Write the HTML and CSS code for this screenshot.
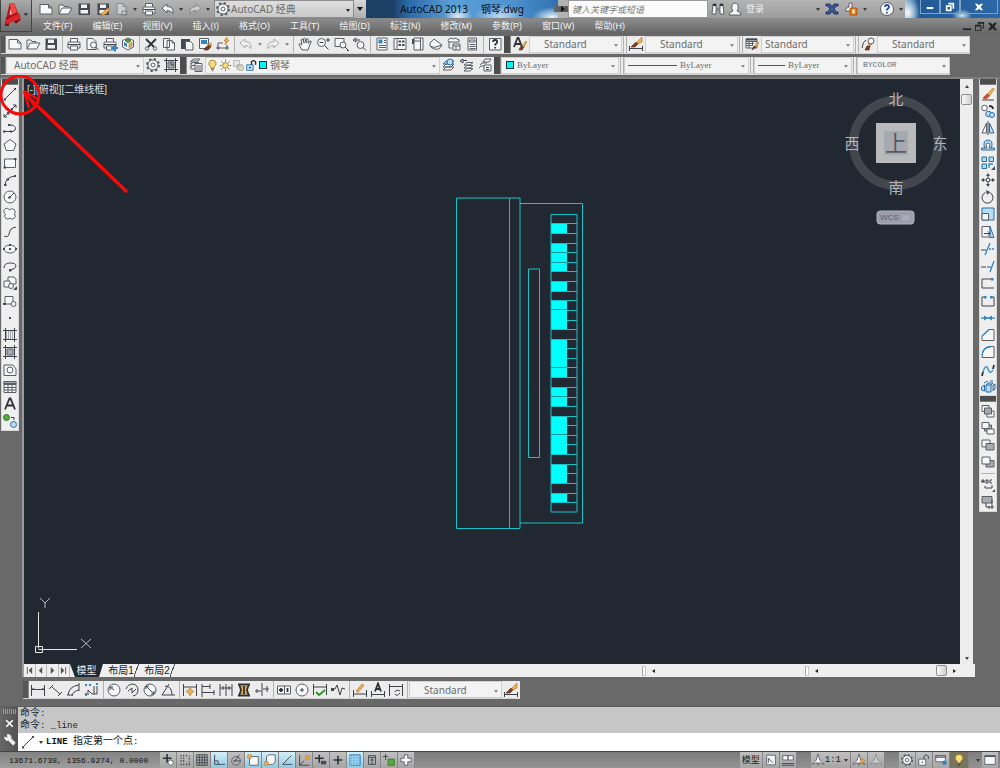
FILE: index.html
```html
<!DOCTYPE html>
<html lang="zh-CN">
<head>
<meta charset="utf-8">
<title>AutoCAD 2013 钢琴.dwg</title>
<link rel="stylesheet" href="styles.css">
</head>
<body>
<svg class="sprite" aria-hidden="true">
<symbol id="new" viewBox="0 0 16 16"><path class="w" d="M2 3.500h8.500l3.500 3.500v6H2zM10.500 3.500V7H14"/></symbol>
<symbol id="open" viewBox="0 0 16 16"><path class="w" d="M2 13V4h4l1 1.500h4V7M2 13l3-6h10l-3.500 6z"/></symbol>
<symbol id="save" viewBox="0 0 16 16"><path class="d" d="M2.500 2.500h11.500v11.500H2.500z"/><path class="wf" d="M5 3.500h6v3.500H5zM4.500 9h7.500v3.500H4.500z"/></symbol>
<symbol id="saveas" viewBox="0 0 16 16"><use href="#save"/><path class="o" d="M7 12l6-5 2 2-6 5-3 1z"/></symbol>
<symbol id="page" viewBox="0 0 16 16"><path class="w" d="M3 2.500h6l3 3v8H3z"/><path d="M9 2.500v3h3M8 10h5v4H8z"/></symbol>
<symbol id="print" viewBox="0 0 16 16"><path class="w" d="M4.500 6V2.500h7V6M4 12H2V7q0-1 1-1h10q1 0 1 1v5h-2M4.500 10h7v4h-7z"/><path class="k" d="M2 8.500h12"/></symbol>
<symbol id="preview" viewBox="0 0 16 16"><path class="w" d="M3 2.500h6l3 3v8H3z"/><circle class="w" cx="9.500" cy="9" r="3"/><path class="k" d="M11.500 11l3 3"/></symbol>
<symbol id="plot" viewBox="0 0 16 16"><use href="#print"/><path class="bf" d="M9 11h3V8.500h2V11h2v2h-2v2.500h-2V13H9z"/></symbol>
<symbol id="cube" viewBox="0 0 16 16"><path class="w" d="M8 2l5.500 2.500V11L8 14l-5.500-3V4.500z"/><path class="bf" d="M4 6l3 1.500V11L4 9.500z"/><path class="gf" d="M8 3l3 1.500-3 2-3-2z"/><path class="o" d="M9 7.500L12 6v4l-3 2z"/></symbol>
<symbol id="cut" viewBox="0 0 16 16"><path class="k2" d="M3 3l8 8M13 3l-8 8"/><circle cx="4" cy="12.500" r="1.700"/><circle cx="12" cy="12.500" r="1.700"/></symbol>
<symbol id="copy" viewBox="0 0 16 16"><path class="w" d="M2.500 2.500h6v9h-6zM6 4.500h5l2.500 2.500v7H6zM11 4.500V7h2.500"/></symbol>
<symbol id="paste" viewBox="0 0 16 16"><path class="d" d="M2 3h9v10H2z"/><path class="w" d="M6.500 5.500h5l2.500 2.500v6H6.500z"/></symbol>
<symbol id="match" viewBox="0 0 16 16"><path class="w" d="M2.500 2.500h9v10h-9z"/><path class="bf" d="M4 4h6v4H4z"/><path class="br" d="M7 14l2-3 3-2 2 2-3 3z"/><path class="o" d="M10 8l4-1 .5 3z"/></symbol>
<symbol id="blk" viewBox="0 0 16 16"><path d="M3 12V7h5M3 12h9V9M2 11h2v2H2zM11 11h2v2h-2z"/><path class="o" d="M12 1l-3 4h2l-1 4 4-5h-2z"/></symbol>
<symbol id="undo" viewBox="0 0 16 16"><path class="w" d="M2 7l5-4v2.500q7 0 6 7-2-3-6-3V12z"/></symbol>
<symbol id="redo" viewBox="0 0 16 16"><path class="w" d="M14 7L9 3v2.500q-7 0-6 7 2-3 6-3V12z"/></symbol>
<symbol id="hand" viewBox="0 0 16 16"><path class="w" d="M5 14L2 8.500q0-1.500 1.500-.5L5 9 4 4q1-1.500 2 0l1 3-.5-4.500q1-1 1.800 0L9 7l.5-4q1-1 1.700 0V7.500L13 5q1.500-.5 1 1l-2 5-1 3z"/></symbol>
<symbol id="zoomrt" viewBox="0 0 16 16"><circle class="w" cx="6.500" cy="6.500" r="4"/><path class="k" d="M9.500 9.500l4 4M4.500 6.500h4M11 4h4M13 2v4"/></symbol>
<symbol id="zoomwin" viewBox="0 0 16 16"><path class="w" d="M2 2.500h9v8H2z"/><circle class="w" cx="10" cy="9" r="3"/><path class="k" d="M12 11l3 3M14 14.500h2"/></symbol>
<symbol id="zoomprev" viewBox="0 0 16 16"><circle class="w" cx="9.500" cy="9" r="3.500"/><path class="k" d="M12 11.500l3 3M2 4l3-2v4zM5 4h4"/></symbol>
<symbol id="props" viewBox="0 0 16 16"><path class="w" d="M3 2h10v12H3z"/><path class="bf" d="M4.500 3.500h4v4h-4z"/><path d="M10 4.500h2M10 6.500h2M5 9.500h7M5 11.500h7"/></symbol>
<symbol id="dc" viewBox="0 0 16 16"><path class="w" d="M2 2.500h12v11H2zM5 2.500v11"/><path class="d" d="M6.500 4.500h2.500v2H6.500zM10 4.500h2.500v2H10zM6.500 8h2.500v2H6.500zM10 8h2.500v2H10z"/></symbol>
<symbol id="tp" viewBox="0 0 16 16"><path class="w" d="M4 2h9v12H4zM10.500 2v12M4 5h6"/><path class="d" d="M2 3h2v5H2z"/></symbol>
<symbol id="sheet" viewBox="0 0 16 16"><path class="w" d="M2 7l4-4 8 6-3 4q-6 1-9-3zM2 10q4 3 9 0l3-1"/></symbol>
<symbol id="markup" viewBox="0 0 16 16"><path class="w" d="M3 3q2-2 4 0 2-2 4 0 3 0 2 3H3q-2-1 0-3M3 6v6h3"/><path class="w" d="M7 8h7v6H7zM7 10h7M10 10v4"/></symbol>
<symbol id="calc" viewBox="0 0 16 16"><path class="w" d="M4 2h8.500v12H4zM5.500 4h5.500v2H5.500z"/><path d="M5.500 8.500h6M5.500 10.500h6M5.500 12.500h6"/></symbol>
<symbol id="help" viewBox="0 0 16 16"><path class="w" d="M2.500 2.500h11.500v11.500H2.500z"/><path class="k2" d="M6 6q0-2 2.200-2t2 2q0 1-2 2.500v1M8.200 11v1.500"/></symbol>
<symbol id="gear" viewBox="0 0 16 16"><circle cx="8" cy="8" r="6" stroke-width="2" stroke-dasharray="2.350 2.350"/><circle class="w" cx="8" cy="8" r="5"/><circle cx="8" cy="8" r="2"/></symbol>
<symbol id="gearlock" viewBox="0 0 16 16"><path class="k" d="M1 3.500h14M1 12.500h14M3.500 1v14M12.500 1v14"/><path class="gy" d="M5 5h6v6H5z"/><path class="k" d="M8 5v3h3"/></symbol>
<symbol id="layprop" viewBox="0 0 16 16"><path class="w" d="M3 4l3-2h6l-2 2zM3 7l2-1.500h6M2 10.500l2-2h3"/><path class="w" d="M7 6.500h7v8H7z"/><path d="M8 9h5M8 11h5M8 13h5M3 4v8h4"/></symbol>
<symbol id="bulb" viewBox="0 0 16 16"><path class="y" d="M8 1.500a4.200 4.200 0 0 1 2 8v2H6v-2a4.200 4.200 0 0 1 2-8z"/><path class="k" d="M6.200 12.500h3.600M7 14.500h2"/></symbol>
<symbol id="sun" viewBox="0 0 16 16"><circle class="y" cx="8" cy="8" r="3.500"/><path class="k" d="M8 1v2M8 13v2M1 8h2M13 8h2M3 3l1.500 1.500M11.500 11.500L13 13M3 13l1.500-1.500M11.500 4.500L13 3"/></symbol>
<symbol id="vp" viewBox="0 0 16 16"><path class="wl" d="M2 2h7v7H2zM6 7h7v6H6z"/><circle class="y2" cx="11" cy="11" r="3.500"/></symbol>
<symbol id="unlock" viewBox="0 0 16 16"><path class="bl" d="M2 7h8v7H2z"/><path class="k2" d="M8 7V3.500q2.500-3 5 0V7M6 9.500v2"/></symbol>
<symbol id="unlockg" viewBox="0 0 16 16"><path class="w" d="M2 7h8v7H2z"/><path class="k" d="M8 7V3.500q2.500-3 5 0V7M6 9.500v2"/></symbol>
<symbol id="lay1" viewBox="0 0 16 16"><path class="w" d="M2 13l3-3h8l-3 3zM2 10l3-3h8l-3 3z"/><path class="bl" d="M2 7l3-3h8l-3 3z"/><circle class="bl" cx="9" cy="5" r="3"/></symbol>
<symbol id="lay2" viewBox="0 0 16 16"><path class="w" d="M5 14l3-2.500h6L11 14zM5 11l3-2.500h6L11 11zM5 8l3-2.500h6L11 8z"/><path class="k" d="M1 4l3-2v4zM4 3.500h4"/></symbol>
<symbol id="lay3" viewBox="0 0 16 16"><path class="w" d="M6 5l2-3h6l-2 3zM3 8l2-2h5M2 11l2-2h3"/><path class="w" d="M7 8h7v6H7z"/><path class="k" d="M9 10.500h3M9 12.500h3"/></symbol>
<symbol id="ts" viewBox="0 0 16 16"><path class="k2" d="M2 11L5.500 2h1L10 11M3.500 8h5"/><path class="br" d="M7 14l2-4 3 1-2 3z"/><path class="o" d="M10.500 9L14 5l1 1-3 5z"/></symbol>
<symbol id="ds" viewBox="0 0 16 16"><path class="k" d="M1.500 10v5M14.500 10v5M2 12.500h12"/><path class="br" d="M3 11l5-5 2 2-3 3z"/><path class="o" d="M9 6l5-5v5l-4 2z"/></symbol>
<symbol id="tbs" viewBox="0 0 16 16"><path class="w" d="M2 3h11v9H2zM2 5.500h11M2 7.500h8M2 9.500h7M5 5v7M8.500 5v5"/><path class="d" d="M2 2.500h11v2H2z"/><path class="br" d="M8 14l2-4 2 1z"/><path class="o" d="M10.500 9.500L14 6l1 1-3 4z"/></symbol>
<symbol id="mls" viewBox="0 0 16 16"><path class="k" d="M2 12q1-7 4-8"/><path class="o" d="M8 8l4-4 2 2-4 4z"/><circle class="w" cx="11" cy="5" r="3"/><path class="br" d="M5 14l2-4 3 0-1 4z"/></symbol>
<symbol id="line" viewBox="0 0 16 16"><path class="k" d="M3 13L13 3"/><path class="d" d="M2 12.500h2v2H2zM12 2h2v2h-2z"/></symbol>
<symbol id="xline" viewBox="0 0 16 16"><path class="k" d="M2 14L14 2M11 2h3v3M2 11v3h3"/><path class="d" d="M5 9h2.500v2.500H5zM9 5h2v2H9z"/></symbol>
<symbol id="pline" viewBox="0 0 16 16"><path class="k" d="M2 11.500h9q3-1 2.500-4Q12 4.500 8 5"/><path class="d" d="M1 10.500h2.500v2H1zM8 10.500h2v2H8zM6 4h2.500v2H6z"/></symbol>
<symbol id="poly" viewBox="0 0 16 16"><path class="w" d="M8 2.500l6 4.500-2.300 6.500H4.300L2 7z"/></symbol>
<symbol id="rect" viewBox="0 0 16 16"><path class="w" d="M2.500 4h11v8.500h-11z"/><path class="d" d="M1.500 11.500h2.500v2H1.500zM12 3h2.500v2H12z"/></symbol>
<symbol id="arc" viewBox="0 0 16 16"><path class="k" d="M3 13q1-8 10-9"/><path class="d" d="M2 12h2.500v2H2zM4.500 6.500h2.500v2H4.500zM12 3h2v2h-2z"/></symbol>
<symbol id="circle" viewBox="0 0 16 16"><circle class="w" cx="8" cy="8" r="6"/><path class="k" d="M7.500 8.500L12 4"/><circle class="d" cx="7.500" cy="8.500" r="1.300"/></symbol>
<symbol id="cloud" viewBox="0 0 16 16"><path class="w" d="M7.500 4a3 3 0 1 1 5 4 3 3 0 1 1-4.500 4 3 3 0 1 1-4.500-4 3 3 0 1 1 4-4z"/></symbol>
<symbol id="spline" viewBox="0 0 16 16"><path class="k" d="M2 12q4 2 5-2t2-5 5-2"/></symbol>
<symbol id="ell" viewBox="0 0 16 16"><ellipse class="w" cx="8" cy="8" rx="6" ry="4"/><path class="d" d="M7 3h2v2H7zM1 7h2v2H1zM13 7h2v2h-2zM7 7h2v2H7z"/></symbol>
<symbol id="ella" viewBox="0 0 16 16"><path class="k" d="M2 10q0-5 6-5t6 3-6 4"/><path class="d" d="M7 11h2.500v2.500H7z"/></symbol>
<symbol id="ins" viewBox="0 0 16 16"><path class="w" d="M6 2h6l2 2v5H6z"/><path class="w" d="M2 6h6v6H2z"/><circle class="w" cx="9" cy="11" r="2.500"/><path class="d" d="M11 15h4v-4z"/></symbol>
<symbol id="mkb" viewBox="0 0 16 16"><path class="w" d="M3 3.500h8V11H3z"/><circle class="w" cx="11.500" cy="11" r="2.500"/><path class="d" d="M1 10h3v2H1z"/></symbol>
<symbol id="pt" viewBox="0 0 16 16"><path class="d" d="M7 7h2v2H7z"/></symbol>
<symbol id="hatch" viewBox="0 0 16 16"><path class="k" d="M1 3.500h14M1 12.500h14M3.500 1v14M12.500 1v14"/><path stroke-dasharray="1 1" d="M4 5h8M4 7h8M4 9h8M4 11h8"/></symbol>
<symbol id="grad" viewBox="0 0 16 16"><path class="k" d="M1 3.500h14M1 12.500h14M3.500 1v14M12.500 1v14"/><path class="gy" d="M5 5h6v6H5z"/></symbol>
<symbol id="region" viewBox="0 0 16 16"><path class="w" d="M2 3h9l3 4v6.500H2z"/><circle class="w" cx="8" cy="8" r="3"/></symbol>
<symbol id="table" viewBox="0 0 16 16"><path class="w" d="M2 2.500h12v11H2zM2 5.500h12M2 8.500h12M2 11h12M6 5v9M10 5v9"/><path class="gy" d="M2 2.500h12v2H2z"/></symbol>
<symbol id="mtext" viewBox="0 0 16 16"><path class="k2" d="M3 13.500L7.500 2.500h1L13 13.500M5 9.500h6"/></symbol>
<symbol id="addsel" viewBox="0 0 16 16"><circle class="gf" cx="4.500" cy="4.500" r="3"/><circle class="bl" cx="11.500" cy="11.500" r="3"/><path class="k" d="M9 4.500h3V7"/></symbol>
<symbol id="erase" viewBox="0 0 16 16"><path class="k" d="M2 14h12"/><path class="o" d="M7 8l6-6 1.500 1-5 7z"/><path class="rd" d="M3 12l4-4 2.500 2L6 13z"/></symbol>
<symbol id="cpy" viewBox="0 0 16 16"><circle class="w" cx="4.500" cy="5" r="2.800"/><circle class="bl" cx="8.500" cy="11" r="2.800"/><circle class="bl" cx="12" cy="12" r="2.500"/><path class="k2" d="M9 3q4 0 4 3"/></symbol>
<symbol id="mirror" viewBox="0 0 16 16"><path class="w" d="M6.500 3v10H2z"/><path class="bl" d="M9.500 3v10H14z"/><path class="k" d="M8 1v14"/></symbol>
<symbol id="offset" viewBox="0 0 16 16"><path class="bl" d="M1.500 13v-2h3q-2-8 3.500-8t3.500 8h3v2z"/><path class="w" d="M4 11h3Q5 6 8 6t1 5h3"/></symbol>
<symbol id="array" viewBox="0 0 16 16"><path class="bl" d="M2 2h4.500v4.500H2zM9 2h4.500v4.500H9zM2 9h4.500v4.500H2z"/><path class="b" d="M9 13V9h4"/><path class="d" d="M11 15h4v-4z"/></symbol>
<symbol id="move" viewBox="0 0 16 16"><path class="k" d="M8 2v12M2 8h12"/><path class="d" d="M6 4l2-3 2 3zM6 12l2 3 2-3zM4 6L1 8l3 2zM12 6l3 2-3 2z"/><path class="w" d="M6.500 6.500h3v3h-3z"/></symbol>
<symbol id="rotate" viewBox="0 0 16 16"><path class="k" d="M9.500 3.500a5.500 5.500 0 1 1-4 0"/><path class="d" d="M6 1l4 2-3 3z"/></symbol>
<symbol id="scale" viewBox="0 0 16 16"><path class="bl" d="M2 2h12v12H2z"/><path class="w" d="M2 7.500h6.500V14H2z"/></symbol>
<symbol id="stretch" viewBox="0 0 16 16"><path class="w" d="M2 2.500h8V13H2z"/><path class="bl" d="M10 2.500L14 13.500h-4z"/><path class="k" d="M4 9.500h6M8 7.500l2 2-2 2"/></symbol>
<symbol id="trim" viewBox="0 0 16 16"><path class="b" d="M5 14L10 2"/><path class="k" d="M1 9h5"/><path class="b" stroke-dasharray="2 1" d="M9 8h6"/></symbol>
<symbol id="extend" viewBox="0 0 16 16"><path class="b" d="M10 14l4-11"/><path class="k" d="M1 9h5"/><path class="b" d="M7 9h4"/></symbol>
<symbol id="break1" viewBox="0 0 16 16"><path class="k" d="M11 4H2v9h12"/><path class="bf" d="M11 3h2.500v2.500H11z"/></symbol>
<symbol id="break2" viewBox="0 0 16 16"><path class="k" d="M5 4H2v9h12V4h-3"/><path class="bf" d="M4 3h2.500v2.500H4zM10 3h2.500v2.500H10z"/></symbol>
<symbol id="join" viewBox="0 0 16 16"><path class="b" d="M1 8h14"/><path class="bf" d="M4 5.500L8 8l-4 2.500zM12 5.500L8 8l4 2.500z"/></symbol>
<symbol id="chamfer" viewBox="0 0 16 16"><path class="w" d="M2 9l7-6.500h5V13.500H2z"/><path class="b" d="M2 9l7-6.500"/></symbol>
<symbol id="fillet" viewBox="0 0 16 16"><path class="w" d="M2 13.500Q2 3 11 2.500h3v11z"/><path class="b" d="M2 11Q3 3 11 2.500"/></symbol>
<symbol id="blend" viewBox="0 0 16 16"><path class="b" d="M3 10Q6 1 8 7t5 1"/><path class="k2" d="M2 14l1-4M13 7l1-4"/></symbol>
<symbol id="explode" viewBox="0 0 16 16"><path class="bl" d="M6 6h5v7H6zM6 6l2-2h5l-2 2M1.500 8l3-2v6l-3-1zM13 6l2-1v5l-2 2zM4 4l4-2M10 2h3"/></symbol>
<symbol id="dr1" viewBox="0 0 16 16"><path class="w" d="M2 2.500h7v6H2zM7 8h7v6H7z"/><path class="gy" d="M4.500 5h7v6h-7z"/></symbol>
<symbol id="dr2" viewBox="0 0 16 16"><path class="gy" d="M4.500 5h7v6h-7z"/><path class="w" d="M2 2.500h7v6H2zM7 9h7v5H7z"/></symbol>
<symbol id="dr3" viewBox="0 0 16 16"><path class="w" d="M2 3h8v7H2z"/><path class="gy" d="M6 6.500h8V13H6z"/></symbol>
<symbol id="dr4" viewBox="0 0 16 16"><path class="gy" d="M6 6.500h8V13H6z"/><path class="w" d="M2 3h8v7H2z"/></symbol>
<symbol id="abc" viewBox="0 0 16 16"><path class="k" d="M2 6V3h2v3M2 4.500h2M6 3v3h2V3H6M12 3h-2v3h2M5 9v2h7V8"/><path class="d" d="M12 15h3v-3z"/></symbol>
<symbol id="hb" viewBox="0 0 16 16"><path class="gy" d="M2 2.500h10V9H2z"/><path class="k" d="M6 9v4h8M12 6v9M9 12v3"/></symbol>
<symbol id="dlin" viewBox="0 0 16 16"><path class="k" d="M1.500 3v11M14.500 3v11M2 7.500h12M2 7.500l2-1.500M14 7.500l-2-1.500"/></symbol>
<symbol id="dali" viewBox="0 0 16 16"><path class="k" d="M1 7l4-4M10 14l4-4M4 5l8 7"/></symbol>
<symbol id="darc" viewBox="0 0 16 16"><path class="k" d="M2 13Q3 4 13 3M6 14q1-5 7-6M1 13h6M13 1v8"/></symbol>
<symbol id="dord" viewBox="0 0 16 16"><path class="k" d="M4 13V8l4 4h5V4M10 4v8"/><path class="bf" d="M1 2h2v2H1zM5 2h2v2H5zM12 1h2v2h-2zM1 11h2v3H1z"/></symbol>
<symbol id="drad" viewBox="0 0 16 16"><circle class="w" cx="8" cy="8" r="6"/><path class="k" d="M4 5l4 3M4 8V5h3"/></symbol>
<symbol id="djog" viewBox="0 0 16 16"><path class="k" d="M2 7Q4 2 9 2q5 1 5 6t-5 6M4 9l4-3v5l4-4"/></symbol>
<symbol id="ddia" viewBox="0 0 16 16"><circle class="w" cx="8" cy="8" r="6"/><path class="k" d="M4 4l8 8M4 7V4h3M9 12h3V9"/></symbol>
<symbol id="dang" viewBox="0 0 16 16"><path class="k" d="M9 2L2 13h13M5 4q7 0 7 9"/></symbol>
<symbol id="dq" viewBox="0 0 16 16"><path class="k" d="M1.500 2v12M14.500 2v12M2 5h12"/><path class="o" d="M8 5l1.500 3 2.500 1.500-2.500 1.500L8 14l-1.500-3L4 9.500 6.500 8z"/></symbol>
<symbol id="dbase" viewBox="0 0 16 16"><path class="k" d="M2 2v13M10 2v5M14 8v5M2 4.500h8M2 10.500h12"/></symbol>
<symbol id="dcont" viewBox="0 0 16 16"><path class="k" d="M2 2v12M8 2v12M14 2v12M2 6h12M5 4v4M11 4v4"/></symbol>
<symbol id="dspace" viewBox="0 0 16 16"><path class="k2" d="M2 2.500h12M2 13.500h12"/><path class="o" d="M5 4h6v8H5z"/><path class="k2" d="M8 4v8M3 2l2 6-2 6M13 2l-2 6 2 6"/></symbol>
<symbol id="dbrk" viewBox="0 0 16 16"><path class="k" d="M8 1v13M1 9h6M9 7h6M3 7v4M13 4v6"/></symbol>
<symbol id="tol" viewBox="0 0 16 16"><path class="w" d="M1.500 4h13v8h-13zM8.500 4v8"/><path class="k2" d="M3 8h4M5 6v4M11.500 6v4"/></symbol>
<symbol id="cmark" viewBox="0 0 16 16"><circle class="w" cx="8" cy="8" r="6"/><path class="k" d="M8 6v4M6 8h4"/></symbol>
<symbol id="insp" viewBox="0 0 16 16"><path class="k" d="M1.500 2v11M14.500 2v11M2 5h12"/><path class="gs" d="M4 10l3 3 6-5"/></symbol>
<symbol id="jogl" viewBox="0 0 16 16"><path class="k" d="M1 7h4l2-4 3 10 2-7 3 1"/><path class="d" d="M1 6h3v3H1z"/></symbol>
<symbol id="dedit" viewBox="0 0 16 16"><path class="k" d="M1.500 8v7M14.500 8v7M2 12h12"/><path class="o" d="M4 9l6-7 2 1.500-6 7z"/></symbol>
<symbol id="dtedit" viewBox="0 0 16 16"><path class="k" d="M1.500 9v6M14.500 9v6M2 12.500h12"/><path class="k2" d="M5 9.500l3-8 3 8M6 7h4"/></symbol>
<symbol id="dupd" viewBox="0 0 16 16"><path class="k" d="M1.500 2v12M14.500 2v12M2 4.500h12M7 10q1-3 5-1M12 11q-3 4-5 1"/></symbol>
<symbol id="wrench" viewBox="0 0 16 16"><path class="wh" d="M2 5l3 1 1-1-1-3q4-1 5 3l-.5 1.500L15 12l-2.500 3-6-6q-4 1-4.500-4z"/></symbol>
<symbol id="infer" viewBox="0 0 16 16"><path class="k2" d="M7 1v10M2 6h10"/><circle class="w" cx="11" cy="11" r="3"/></symbol>
<symbol id="snap" viewBox="0 0 16 16"><path class="k2" stroke-dasharray="1 2" d="M3 3h7M3 6h6M3 9h6M3 13h10M13 3v10"/></symbol>
<symbol id="grid" viewBox="0 0 16 16"><path class="k" d="M2 2h12v12H2zM2 5h12M2 8h12M2 11h12M5 2v12M8 2v12M11 2v12"/></symbol>
<symbol id="ortho" viewBox="0 0 16 16"><path class="k" d="M3 2v11h12M3 9h4v4"/></symbol>
<symbol id="polar" viewBox="0 0 16 16"><circle cx="8" cy="9" r="5"/><path class="k" d="M5 9h8M6 10l6-8"/></symbol>
<symbol id="osnap" viewBox="0 0 16 16"><path class="w" d="M4 4h10v10H4z"/><path class="o" d="M2 2h4v4H2z"/></symbol>
<symbol id="osnap3" viewBox="0 0 16 16"><path class="w" d="M4 4l3-2h7v8l-3 3H4z"/><path class="o" d="M2 10h4v4H2z"/></symbol>
<symbol id="otrack" viewBox="0 0 16 16"><path class="k" d="M3 13L13 3M3 13h11"/></symbol>
<symbol id="ducs" viewBox="0 0 16 16"><path class="k" d="M3 2v12h11M3 14l5-5"/><path class="o" d="M10 3h4v4h-4z"/></symbol>
<symbol id="dyn" viewBox="0 0 16 16"><path class="k2" d="M6 2v9M1 6h10"/><path class="d" d="M8 9h6v4H8z"/></symbol>
<symbol id="lwt" viewBox="0 0 16 16"><path class="k2" d="M8 3v10M3 8h10"/></symbol>
<symbol id="tpy" viewBox="0 0 16 16"><path class="bs" d="M2 2h12v12H2z"/><path class="wd" d="M2 4h12M2 7h12M2 10h12M2 13h12"/></symbol>
<symbol id="qp" viewBox="0 0 16 16"><path class="k" d="M4 3h8v10H4zM4 5h8M8 5v8M6 8h4"/></symbol>
<symbol id="sc" viewBox="0 0 16 16"><path class="k" d="M4 1v7M1 4h6"/><path class="gf" d="M7 7h7v7H7z"/></symbol>
<symbol id="am" viewBox="0 0 16 16"><path class="w" d="M6 2h4v4h4v4h-4v4H6v-4H2V6h4z"/></symbol>
<symbol id="lay" viewBox="0 0 16 16"><path class="w" d="M3 2.500h10v11H3z"/><path class="k" d="M5 6l5 5M5 11V6"/></symbol>
<symbol id="qv" viewBox="0 0 16 16"><path class="w" d="M2 3h6v5H2zM8 3h6v5H8z"/><path class="k" d="M1 12h14M1 14h14"/></symbol>
<symbol id="ann" viewBox="0 0 16 16"><path class="w" d="M8 1l2 7 5 5-6-2-1 3-1-3-6 2 5-5z"/></symbol>
<symbol id="annv" viewBox="0 0 16 16"><use href="#ann"/><path class="o" d="M12 6l1 2 2 1-2 1-1 3-1-3-2-1 2-1z"/></symbol>
<symbol id="hw" viewBox="0 0 16 16"><path class="w" d="M2 3h11v7H2z"/><path class="gy" d="M2 3h11v2H2z"/><circle class="bf" cx="12" cy="11" r="2.500"/></symbol>
<symbol id="clean" viewBox="0 0 16 16"><path class="w" d="M2 3h12v10H2z"/><path class="d" d="M2 3h12v1.500H2z"/></symbol>
<symbol id="bino" viewBox="0 0 16 16"><path class="w" d="M3 3h3v5h4V3h3l1 10h-4V9H6v4H2z"/><path class="k2" d="M3 4h3M10 4h3"/></symbol>
<symbol id="user" viewBox="0 0 16 16"><path class="w" d="M2 14q0-3 4-4Q4 8 5 4q3-4 6 0 1 4-1 6 4 1 4 4z"/></symbol>
<symbol id="exch" viewBox="0 0 16 16"><path class="nv" d="M2 3h4l2 3 2-3h4v2h-2l-2 3 2 3h2v2h-4l-2-3-2 3H2v-2h2l2-3-2-3H2z"/></symbol>
<symbol id="a360" viewBox="0 0 16 16"><path class="w" d="M6 2h3v8H2q0-3 4-4z"/><path class="og" d="M7 7h7v7H7z"/><path class="wt" d="M10.500 8.500v4"/></symbol>
<symbol id="qhelp" viewBox="0 0 16 16"><circle class="w" cx="8" cy="8" r="6.500"/><path class="nb" d="M6 6q0-2 2-2t2 2q0 1-2 2.500v1M8 11v1.500"/></symbol>
</svg>

<header class="top">
  <button class="app" aria-label="应用程序菜单">
    <svg viewBox="0 0 32 31" aria-hidden="true"><path fill="#b31218" d="M4 26L9 3l5-1 7 18-5 4-3-4-4 1-1 5z"/><path fill="#ef4a47" d="M9 3l5-1 3 10-5 2z"/><path fill="#7e0a10" d="M4 26l2-9 15 3-5 4-3-3-4 1-1 5z"/><path fill="#d9262a" d="M5 20l15-7 1 6-16 6z"/><path fill="#f7b5b0" d="M10 8l2 6-3 1z"/><path fill="#333" d="M24 13h5l-2.500 3z"/></svg>
  </button>
  <div class="rows">
    <div class="title">
      <div class="quick">
        <button class="t" aria-label="新建"><svg><use href="#new"/></svg></button>
        <button class="t" aria-label="打开"><svg><use href="#open"/></svg></button>
        <button class="t" aria-label="保存"><svg><use href="#save"/></svg></button>
        <button class="t" aria-label="另存为"><svg><use href="#saveas"/></svg></button>
        <button class="t off" aria-label="页面"><svg><use href="#page"/></svg></button><i class="tri"></i>
        <button class="t" aria-label="打印"><svg><use href="#print"/></svg></button>
        <button class="t" aria-label="放弃"><svg><use href="#undo"/></svg></button><i class="tri"></i>
        <button class="t off" aria-label="重做"><svg><use href="#redo"/></svg></button><i class="tri"></i>
      </div>
      <div class="combo ws"><svg><use href="#gear"/></svg><select aria-label="工作空间"><option>AutoCAD 经典</option></select></div>
      <button class="more" aria-label="自定义"><i class="tri"></i></button>
      <h1><span>AutoCAD 2013</span><span>钢琴.dwg</span></h1>
      <button class="more slim" aria-label="展开搜索"><i class="tri side"></i></button>
      <input class="search" type="text" aria-label="搜索" placeholder="键入关键字或短语">
      <div class="info">
        <button class="t" aria-label="搜索"><svg><use href="#bino"/></svg></button>
        <button class="login"><svg><use href="#user"/></svg>登录</button>
        <i class="tri push"></i>
        <button class="t" aria-label="Exchange"><svg><use href="#exch"/></svg></button>
        <button class="t" aria-label="连接"><svg><use href="#a360"/></svg></button><i class="tri"></i>
        <button class="t last" aria-label="帮助"><svg><use href="#qhelp"/></svg></button><i class="tri"></i>
      </div>
      <div class="win">
        <button aria-label="最小化"><svg viewBox="0 0 12 12"><path d="M2 6h8v2.500H2z"/></svg></button>
        <button aria-label="还原"><svg viewBox="0 0 12 12"><path d="M4 1h7v7H9V3H4zM1 4h7v7H1zM3 6v3h3V6z" fill-rule="evenodd"/></svg></button>
        <button class="close" aria-label="关闭"><svg viewBox="0 0 12 12"><path d="M1 2h3l2 2 2-2h3L8 6l3 4H8L6 8l-2 2H1l3-4z"/></svg></button>
      </div>
    </div>
    <nav class="menu">
      <button>文件(F)</button><button>编辑(E)</button><button>视图(V)</button><button>插入(I)</button><button>格式(O)</button><button>工具(T)</button><button>绘图(D)</button><button>标注(N)</button><button>修改(M)</button><button>参数(P)</button><button>窗口(W)</button><button>帮助(H)</button>
      <div class="docwin">
        <button aria-label="最小化文档"><svg viewBox="0 0 12 12"><path d="M2 8h9v2H2z"/></svg></button>
        <button aria-label="还原文档"><svg viewBox="0 0 12 12"><path fill-rule="evenodd" d="M4 1h7v7H8v3H1V4h3zM5 4h3v3h2V3H5zM2 6v4h5V6z"/></svg></button>
        <button aria-label="关闭文档"><svg viewBox="0 0 12 12"><path d="M1 2h3l2 2 2-2h3L8 6l3 4H8L6 8l-2 2H1l3-4z"/></svg></button>
      </div>
    </nav>
  </div>
</header>

<div class="dock">
  <div class="bar">
    <i class="grip"></i>
    <button class="t" aria-label="新建"><svg><use href="#new"/></svg></button>
    <button class="t" aria-label="打开"><svg><use href="#open"/></svg></button>
    <button class="t" aria-label="保存"><svg><use href="#save"/></svg></button><i class="sep"></i>
    <button class="t" aria-label="打印"><svg><use href="#print"/></svg></button>
    <button class="t" aria-label="打印预览"><svg><use href="#preview"/></svg></button>
    <button class="t" aria-label="发布"><svg><use href="#plot"/></svg></button>
    <button class="t" aria-label="三维打印"><svg><use href="#cube"/></svg></button><i class="sep"></i>
    <button class="t" aria-label="剪切"><svg><use href="#cut"/></svg></button>
    <button class="t" aria-label="复制"><svg><use href="#copy"/></svg></button>
    <button class="t" aria-label="粘贴"><svg><use href="#paste"/></svg></button>
    <button class="t" aria-label="特性匹配"><svg><use href="#match"/></svg></button>
    <button class="t" aria-label="块编辑器"><svg><use href="#blk"/></svg></button><i class="sep"></i>
    <button class="t off" aria-label="放弃"><svg><use href="#undo"/></svg></button><i class="tri pale"></i>
    <button class="t off" aria-label="重做"><svg><use href="#redo"/></svg></button><i class="tri pale"></i><i class="sep"></i>
    <button class="t" aria-label="平移"><svg><use href="#hand"/></svg></button>
    <button class="t" aria-label="实时缩放"><svg><use href="#zoomrt"/></svg></button>
    <button class="t" aria-label="窗口缩放"><svg><use href="#zoomwin"/></svg></button>
    <button class="t" aria-label="缩放上一个"><svg><use href="#zoomprev"/></svg></button><i class="sep"></i>
    <button class="t" aria-label="特性"><svg><use href="#props"/></svg></button>
    <button class="t" aria-label="设计中心"><svg><use href="#dc"/></svg></button>
    <button class="t" aria-label="工具选项板"><svg><use href="#tp"/></svg></button>
    <button class="t" aria-label="图纸集"><svg><use href="#sheet"/></svg></button>
    <button class="t" aria-label="标记集"><svg><use href="#markup"/></svg></button>
    <button class="t" aria-label="计算器"><svg><use href="#calc"/></svg></button><i class="sep"></i>
    <button class="t" aria-label="帮助"><svg><use href="#help"/></svg></button>
  </div>
  <div class="bar styles">
    <i class="grip wide"></i>
    <button class="t" aria-label="文字样式"><svg><use href="#ts"/></svg></button>
    <div class="combo in"><select aria-label="文字样式列表"><option>Standard</option></select></div><i class="sep"></i>
    <button class="t" aria-label="标注样式"><svg><use href="#ds"/></svg></button>
    <div class="combo in"><select aria-label="标注样式列表"><option>Standard</option></select></div><i class="sep"></i>
    <button class="t" aria-label="表格样式"><svg><use href="#tbs"/></svg></button>
    <div class="combo"><select aria-label="表格样式列表"><option>Standard</option></select></div><i class="sep"></i>
    <button class="t" aria-label="多重引线样式"><svg><use href="#mls"/></svg></button>
    <div class="combo in"><select aria-label="多重引线样式列表"><option>Standard</option></select></div>
  </div>
</div>

<div class="dock">
  <div class="bar">
    <i class="grip"></i>
    <div class="combo c-ws"><select aria-label="工作空间列表"><option>AutoCAD 经典</option></select></div>
    <button class="t" aria-label="工作空间设置"><svg><use href="#gear"/></svg></button>
    <button class="t" aria-label="我的工作空间"><svg><use href="#gearlock"/></svg></button>
  </div>
  <div class="bar">
    <i class="grip wide"></i>
    <button class="t" aria-label="图层特性"><svg><use href="#layprop"/></svg></button>
    <div class="combo c-layer"><svg><use href="#bulb"/></svg><svg><use href="#sun"/></svg><svg><use href="#vp"/></svg><svg><use href="#unlock"/></svg><i class="swatch"></i><select aria-label="图层"><option>钢琴</option></select></div>
    <button class="t" aria-label="置为当前"><svg><use href="#lay1"/></svg></button>
    <button class="t" aria-label="上一个图层"><svg><use href="#lay2"/></svg></button>
    <button class="t" aria-label="图层状态"><svg><use href="#lay3"/></svg></button>
  </div>
  <div class="bar serif">
    <i class="grip wide"></i>
    <div class="combo c-color"><i class="swatch"></i><select aria-label="颜色"><option>ByLayer</option></select></div><i class="sep"></i>
    <div class="combo c-lt"><i class="rule long"></i><select aria-label="线型"><option>ByLayer</option></select></div><i class="sep"></i>
    <div class="combo c-lw"><i class="rule"></i><select aria-label="线宽"><option>ByLayer</option></select></div><i class="sep"></i>
    <div class="combo c-plot"><select aria-label="打印样式"><option>BYCOLOR</option></select></div>
  </div>
</div>

<main class="work">
  <aside class="rail">
    <div class="palette">
      <i class="grab"></i>
      <button class="v" aria-label="直线"><svg><use href="#line"/></svg></button>
      <button class="v" aria-label="构造线"><svg><use href="#xline"/></svg></button>
      <button class="v" aria-label="多段线"><svg><use href="#pline"/></svg></button>
      <button class="v" aria-label="多边形"><svg><use href="#poly"/></svg></button>
      <button class="v" aria-label="矩形"><svg><use href="#rect"/></svg></button>
      <button class="v" aria-label="圆弧"><svg><use href="#arc"/></svg></button>
      <button class="v" aria-label="圆"><svg><use href="#circle"/></svg></button>
      <button class="v" aria-label="修订云线"><svg><use href="#cloud"/></svg></button>
      <button class="v" aria-label="样条曲线"><svg><use href="#spline"/></svg></button>
      <button class="v" aria-label="椭圆"><svg><use href="#ell"/></svg></button>
      <button class="v" aria-label="椭圆弧"><svg><use href="#ella"/></svg></button>
      <button class="v" aria-label="插入块"><svg><use href="#ins"/></svg></button>
      <button class="v" aria-label="创建块"><svg><use href="#mkb"/></svg></button>
      <button class="v" aria-label="点"><svg><use href="#pt"/></svg></button>
      <button class="v" aria-label="图案填充"><svg><use href="#hatch"/></svg></button>
      <button class="v" aria-label="渐变色"><svg><use href="#grad"/></svg></button>
      <button class="v" aria-label="面域"><svg><use href="#region"/></svg></button>
      <button class="v" aria-label="表格"><svg><use href="#table"/></svg></button>
      <button class="v" aria-label="多行文字"><svg><use href="#mtext"/></svg></button>
      <button class="v" aria-label="添加选定对象"><svg><use href="#addsel"/></svg></button>
    </div>
  </aside>
  <section class="center">
    <div class="view">
      <div class="canvas">
        <p class="vlabel">[-][俯视][二维线框]</p>
        <svg class="piano" viewBox="456 197 128 333" role="img" aria-label="钢琴">
          <g fill="#0ff"><path d="M551 224h16v10h-16zM551 243h16v29h-16zM551 282h16v9h-16zM551 301h16v29h-16zM551 339h16v39h-16zM551 387h16v19h-16zM551 416h16v38h-16zM551 464h16v19h-16zM551 493h16v10h-16z"/></g>
          <g fill="none" stroke="#16c3c8"><path d="M456.500 198h63.500v330.500h-63.500zM509.500 198v330.500M520 203.500h62.500v319.500H520M528.500 269h11v188.500h-11zM551 214.500h26v297.500h-26z"/><path d="M551 223.500h26M551 233.500h26M551 243.500h26M567 252.500h10M567 262.500h10M551 271.500h26M551 281.500h26M551 291.500h26M551 300.500h26M567 310.500h10M567 320.500h10M551 329.500h26M551 339.500h26M567 348.500h10M567 358.500h10M567 367.500h10M551 377.500h26M551 387.500h26M567 397.500h10M551 406.500h26M551 416.500h26M567 425.500h10M567 435.500h10M567 444.500h10M551 454.500h26M551 464.500h26M567 473.500h10M551 483.500h26M551 493.500h26M551 502.500h26"/></g>
          <path fill="none" stroke="#0a9a9e" d="M551 252.500h16M551 262.500h16M551 309.500h16M551 367.500h16M551 396.500h16M551 434.500h16"/>
        </svg>
        <svg class="compass" viewBox="0 0 110 142" role="img" aria-label="ViewCube">
          <circle cx="53" cy="56" r="42.500" fill="none" stroke="#42464d" stroke-width="9"/>
          <path fill="#b9babc" d="M33 36h40v40H33z"/><path fill="#a6a9ae" d="M41 44h24v24H41z"/>
          <g class="dirs"><text x="53" y="18">北</text><text x="9" y="62">西</text><text x="97" y="62">东</text><text x="53" y="106">南</text></g>
          <text class="face" x="53" y="64">上</text>
          <rect x="34" y="124" width="37" height="13" rx="3" fill="#9b9dab" stroke="#b3b4be"/><text class="wcs" x="37" y="133">WCS</text><path fill="#a9abb8" d="M59 128h8v5h-8z"/>
        </svg>
        <svg class="ucs" viewBox="0 0 62 62" role="img" aria-label="UCS"><path fill="none" stroke="#e4e5e7" d="M5.500 52.500V16M5.500 53.500H44M2.500 50.500h7v6h-7z"/><path fill="none" stroke="#b6b8bb" d="M7 2l5 5 5-5M12 7v5M48 43l10 9M58 43l-10 9"/></svg>
      </div>
      <div class="vscroll"><i class="up"></i><i class="thumb"></i><i class="down"></i></div>
    </div>
    <div class="tabs">
      <div class="nav"><button aria-label="第一个"><svg viewBox="0 0 8 8"><path d="M1 0h1v8H1zM7 0v8L3 4z"/></svg></button><button aria-label="上一个"><svg viewBox="0 0 8 8"><path d="M6 0v8L2 4z"/></svg></button><button aria-label="下一个"><svg viewBox="0 0 8 8"><path d="M2 0v8l4-4z"/></svg></button><button aria-label="最后一个"><svg viewBox="0 0 8 8"><path d="M6 0h1v8H6zM1 0v8l4-4z"/></svg></button></div>
      <button class="tab on">模型</button><button class="tab">布局1</button><button class="tab">布局2</button>
      <div class="hscroll"><i class="split"></i><i class="lf"></i><i class="gapf"></i><i class="split"></i><i class="lf"></i><i class="gapf"></i><i class="thumb"></i><i class="rt"></i></div>
    </div>
    <div class="bar dims">
      <i class="grip"></i>
      <button class="t" aria-label="线性"><svg><use href="#dlin"/></svg></button>
      <button class="t" aria-label="对齐"><svg><use href="#dali"/></svg></button>
      <button class="t" aria-label="弧长"><svg><use href="#darc"/></svg></button>
      <button class="t" aria-label="坐标"><svg><use href="#dord"/></svg></button><i class="sep"></i>
      <button class="t" aria-label="半径"><svg><use href="#drad"/></svg></button>
      <button class="t" aria-label="折弯"><svg><use href="#djog"/></svg></button>
      <button class="t" aria-label="直径"><svg><use href="#ddia"/></svg></button>
      <button class="t" aria-label="角度"><svg><use href="#dang"/></svg></button><i class="sep"></i>
      <button class="t" aria-label="快速标注"><svg><use href="#dq"/></svg></button>
      <button class="t" aria-label="基线"><svg><use href="#dbase"/></svg></button>
      <button class="t" aria-label="连续"><svg><use href="#dcont"/></svg></button>
      <button class="t" aria-label="等距标注"><svg><use href="#dspace"/></svg></button>
      <button class="t" aria-label="折断标注"><svg><use href="#dbrk"/></svg></button><i class="sep"></i>
      <button class="t" aria-label="公差"><svg><use href="#tol"/></svg></button>
      <button class="t" aria-label="圆心标记"><svg><use href="#cmark"/></svg></button>
      <button class="t" aria-label="检验"><svg><use href="#insp"/></svg></button>
      <button class="t" aria-label="折弯线性"><svg><use href="#jogl"/></svg></button><i class="sep"></i>
      <button class="t" aria-label="编辑标注"><svg><use href="#dedit"/></svg></button>
      <button class="t" aria-label="编辑标注文字"><svg><use href="#dtedit"/></svg></button>
      <button class="t" aria-label="标注更新"><svg><use href="#dupd"/></svg></button><i class="sep"></i>
      <div class="combo in"><select aria-label="当前标注样式"><option>Standard</option></select></div>
      <button class="t" aria-label="标注样式管理"><svg><use href="#ds"/></svg></button>
    </div>
  </section>
  <aside class="rail right">
    <div class="palette">
      <i class="grab"></i>
      <button class="v" aria-label="删除"><svg><use href="#erase"/></svg></button>
      <button class="v" aria-label="复制对象"><svg><use href="#cpy"/></svg></button>
      <button class="v" aria-label="镜像"><svg><use href="#mirror"/></svg></button>
      <button class="v" aria-label="偏移"><svg><use href="#offset"/></svg></button>
      <button class="v" aria-label="阵列"><svg><use href="#array"/></svg></button>
      <button class="v" aria-label="移动"><svg><use href="#move"/></svg></button>
      <button class="v" aria-label="旋转"><svg><use href="#rotate"/></svg></button>
      <button class="v" aria-label="缩放"><svg><use href="#scale"/></svg></button>
      <button class="v" aria-label="拉伸"><svg><use href="#stretch"/></svg></button>
      <button class="v" aria-label="修剪"><svg><use href="#trim"/></svg></button>
      <button class="v" aria-label="延伸"><svg><use href="#extend"/></svg></button>
      <button class="v" aria-label="打断于点"><svg><use href="#break1"/></svg></button>
      <button class="v" aria-label="打断"><svg><use href="#break2"/></svg></button>
      <button class="v" aria-label="合并"><svg><use href="#join"/></svg></button>
      <button class="v" aria-label="倒角"><svg><use href="#chamfer"/></svg></button>
      <button class="v" aria-label="圆角"><svg><use href="#fillet"/></svg></button>
      <button class="v" aria-label="光顺曲线"><svg><use href="#blend"/></svg></button>
      <button class="v" aria-label="分解"><svg><use href="#explode"/></svg></button>
    </div>
    <div class="palette">
      <i class="grab"></i>
      <button class="v" aria-label="前置"><svg><use href="#dr1"/></svg></button>
      <button class="v" aria-label="后置"><svg><use href="#dr2"/></svg></button>
      <button class="v" aria-label="置于对象之上"><svg><use href="#dr3"/></svg></button>
      <button class="v" aria-label="置于对象之下"><svg><use href="#dr4"/></svg></button>
      <i class="hsep"></i>
      <button class="v" aria-label="文字前置"><svg><use href="#abc"/></svg></button>
      <button class="v" aria-label="图案填充后置"><svg><use href="#hb"/></svg></button>
    </div>
  </aside>
</main>

<section class="cmd">
  <div class="side"><i class="dots"></i><button aria-label="关闭"><svg viewBox="0 0 16 16"><path class="wx" d="M4 4l8 8M12 4l-8 8"/></svg></button><button aria-label="自定义"><svg><use href="#wrench"/></svg></button></div>
  <div class="log">
    <p><span class="zh">命令</span>:</p>
    <p><span class="zh">命令</span>: _line</p>
    <label class="prompt"><svg><use href="#line"/></svg><i class="tri"></i><span><b>LINE</b> <span class="zh">指定第一个点</span>:</span><input type="text" aria-label="命令输入"></label>
  </div>
</section>

<footer class="status">
  <output>13671.6738, 1356.9274, 0.0000</output>
  <div class="group modes">
    <button class="s" aria-label="推断约束"><svg><use href="#infer"/></svg></button>
    <button class="s" aria-label="捕捉"><svg><use href="#snap"/></svg></button>
    <button class="s" aria-label="栅格"><svg><use href="#grid"/></svg></button>
    <button class="s on" aria-label="正交"><svg><use href="#ortho"/></svg></button>
    <button class="s" aria-label="极轴"><svg><use href="#polar"/></svg></button>
    <button class="s on" aria-label="对象捕捉"><svg><use href="#osnap"/></svg></button>
    <button class="s on" aria-label="三维对象捕捉"><svg><use href="#osnap3"/></svg></button>
    <button class="s on" aria-label="对象追踪"><svg><use href="#otrack"/></svg></button>
    <button class="s" aria-label="动态UCS"><svg><use href="#ducs"/></svg></button>
    <button class="s" aria-label="动态输入"><svg><use href="#dyn"/></svg></button>
    <button class="s" aria-label="线宽"><svg><use href="#lwt"/></svg></button>
    <button class="s on" aria-label="透明度"><svg><use href="#tpy"/></svg></button>
    <button class="s" aria-label="快捷特性"><svg><use href="#qp"/></svg></button>
    <button class="s" aria-label="选择循环"><svg><use href="#sc"/></svg></button>
    <button class="s" aria-label="注释监视器"><svg><use href="#am"/></svg></button>
  </div>
  <div class="group push"><button class="s text">模型</button><button class="s" aria-label="快速查看布局"><svg><use href="#lay"/></svg></button><button class="s" aria-label="快速查看图形"><svg><use href="#qv"/></svg></button></div>
  <div class="group"><button class="s text ratio"><svg><use href="#ann"/></svg>1:1<i class="tri"></i></button><button class="s" aria-label="注释可见性"><svg><use href="#annv"/></svg></button><button class="s off" aria-label="自动添加比例"><svg><use href="#ann"/></svg></button></div>
  <div class="group"><button class="s" aria-label="切换工作空间"><svg><use href="#gear"/></svg></button><button class="s" aria-label="锁定"><svg><use href="#unlockg"/></svg></button><button class="s" aria-label="硬件加速"><svg><use href="#hw"/></svg></button><button class="s bulb" aria-label="隔离对象"><svg><use href="#bulb"/></svg></button></div>
  <div class="group"><i class="tri"></i><button class="s" aria-label="全屏显示"><svg><use href="#clean"/></svg></button></div>
</footer>

<svg class="callout" viewBox="0 0 130 120" aria-hidden="true"><circle cx="20" cy="20" r="19" fill="none" stroke="#f40a0a" stroke-width="3"/><path fill="none" stroke="#f40a0a" stroke-width="3.500" stroke-linecap="round" d="M27 21l99 95"/><path fill="none" stroke="#f40a0a" stroke-width="2.500" stroke-linejoin="round" d="M24 16l5 17M24 16l15 9M24 16l10 14"/></svg>
</body>
</html>
```
FILE: styles.css
```css
* { box-sizing: border-box; }
body {
  margin: 0; min-height: 100vh; display: flex; flex-direction: column;
  background: #696969; color: #222;
  font: 10px/14px "Noto Sans", "Noto Sans CJK SC", sans-serif;
  overflow-x: hidden; position: relative;
}
button, input, select { font: inherit; color: inherit; margin: 0; padding: 0; border: 0; background: none; border-radius: 0; outline: 0; }
p { margin: 0; }
i { flex: none; }
svg { display: block; }

/* icon sprite */
.sprite { position: absolute; width: 0; height: 0; }
.t, .v, .s { flex: none; display: flex; align-items: center; justify-content: center; }
.t svg, .v svg, .s svg, .combo svg, .login svg, .prompt svg, .side svg { width: 16px; height: 16px; flex: none; fill: none; stroke: #5a5e66; stroke-width: 1; }
.w { fill: #f6f7f8; }
.wl { fill: #ededed; stroke: #a8a8a8; }
.wf { fill: #f2f2f2; stroke: none; }
.d { fill: #454a54; stroke: none; }
.k { stroke: #3e424a; }
.k2 { stroke: #2d3138; stroke-width: 1.8; }
.b { stroke: #2f86c6; stroke-width: 1.3; }
.bf { fill: #2f86c6; stroke: none; }
.bl { fill: #b9dcf5; stroke: #2a6ea6; }
.bs { fill: #7fbfe8; stroke: #2f80bd; }
.gf { fill: #5aa83c; stroke: #2f7a20; }
.gs { stroke: #2c9a1e; stroke-width: 2; }
.gy { fill: #a9abb2; stroke: #5a5e66; }
.o { fill: #f0b04a; stroke: #a8742a; stroke-width: .6; }
.og { fill: #e07a1c; stroke: #b55a0a; }
.wt, .wx { stroke: #fff; stroke-width: 2; }
.br { fill: #7c4024; stroke: #4e2412; stroke-width: .6; }
.rd { fill: #d8502c; stroke: #8e2c14; stroke-width: .6; }
.y { fill: #f8dc7a; stroke: #8f7528; }
.y2 { fill: #ded9bd; stroke: #b0b0a8; }
.nv { fill: #3c5a9a; stroke: #1f3468; }
.nb { stroke: #1c4fa8; stroke-width: 1.8; }
.wd { stroke: #fff; stroke-dasharray: 1 2; }
.wh { fill: #f2f2f2; stroke: #f2f2f2; }
.off svg { opacity: .45; }

.tri { width: 9px; display: flex; justify-content: center; align-self: center; }
.tri::before { content: ""; border: 2px solid transparent; border-top: 3px solid #3a3a3a; border-bottom: 0; }
.tri.pale::before { border-top-color: #8b8b8b; }
.tri.side::before { border: 3px solid transparent; border-left: 4px solid #111; border-right: 0; }

/* title and menu */
.top { display: flex; height: 34px; }
.app { width: 32px; height: 32px; background: linear-gradient(#a9a9a9, #6f6f6f); border: 1px solid #444; border-top: 0; flex: none; }
.rows { flex: 1; min-width: 0; display: flex; flex-direction: column; }
.title { display: flex; height: 19px; background: linear-gradient(#b4b4b4, #9c9c9c); align-items: stretch; border-bottom: 1px solid #868686; }
.quick { display: flex; align-items: center; padding-left: 4px; width: 182px; flex: none; }
.quick .t { width: 19px; }
.quick .tri { width: 8px; }
.combo { position: relative; display: flex; align-items: center; background: #f3f3f3; border: 1px solid #cfcfcf; min-width: 0; width: 93px; flex: none; }
.combo::after { content: ""; position: absolute; right: 3px; top: 50%; border: 2px solid transparent; border-top: 3px solid #8b8b8b; border-bottom: 0; pointer-events: none; }
.combo select { appearance: none; flex: 1; min-width: 0; height: 14px; padding-left: 3px; color: #6b6b6b; }
.combo.in select { padding-left: 14px; }
.ws { width: 140px; background: linear-gradient(#dedede, #cacaca); border-color: #8c8c8c; }
.ws select { padding-left: 0; }
.ws::after { border-top-color: #222; }
.more { width: 12px; flex: none; background: linear-gradient(#d8d8d8, #adadad); display: flex; align-items: center; justify-content: center; }
.more .tri::before { border-width: 3px; border-top-width: 4px; border-bottom: 0; border-top-color: #111; }
.more.slim { width: 10px; background: #b2b2b2; }
.more .tri.side::before { border: 3px solid transparent; border-left: 4px solid #111; border-right: 0; }
h1 { margin: 0; flex: 1; min-width: 0; display: flex; gap: 13px; align-items: center; justify-content: center; font: inherit; color: #0a0f18;
  white-space: nowrap;
  background: radial-gradient(ellipse 14px 9px at 48% 90%, #fffc, transparent), radial-gradient(ellipse 26px 12px at 70% 90%, #dcebf7cc, transparent), radial-gradient(ellipse 20px 10px at 97% 95%, #eef6fc, transparent), linear-gradient(90deg, #1c3f66 0 14%, #2a6aa8 22%, #5c9fd6 45%, #4f93cf 75%, #2f71b0); }
.search { width: 140px; flex: none; background: #fbfbfb; padding-left: 3px; border: 1px solid #9a9a9a; }
.search::placeholder { color: #777; font-size: 9px; font-style: italic; opacity: 1; }
.info { display: flex; align-items: center; width: 197px; flex: none; }
.info .t, .login { width: 19px; }
.info .last { width: 18px; margin-left: 9px; }
.info .push { margin-left: auto; }
.login { display: flex; align-items: center; gap: 3px; width: auto; color: #f2f2f2; white-space: nowrap; font-size: 9px; }
.win { width: 95px; flex: none; display: flex; align-items: flex-start; padding-left: 15px; background: radial-gradient(ellipse 12px 16px at 3% 70%, #f4fbff, transparent), radial-gradient(ellipse 10px 6px at 60% 85%, #cfe6f0, transparent), linear-gradient(90deg, #7fa9c4, #1f5a96 14%, #2d68a4); }
.win button { width: 20px; height: 14px; border: 1px solid #7fa3c8; border-top: 0; display: flex; align-items: center; justify-content: center; }
.win .close { width: 38px; }
.win svg { width: 10px; height: 10px; fill: #fff; }
.menu { flex: 1; display: flex; align-items: center; background: linear-gradient(#8b8b8b, #656565); font: 9px/13px "Liberation Sans", "Noto Sans CJK SC", sans-serif; color: #f4f4f4; padding-left: 1px; }
.menu > button { padding: 0 10px; white-space: nowrap; }
.docwin { margin-left: auto; display: flex; gap: 2px; padding-right: 2px; }
.docwin svg { width: 11px; height: 11px; fill: #252525; }

/* docked toolbars */
.dock { display: flex; align-items: center; height: 21px; padding-left: 1px; }
.bar { display: flex; align-items: stretch; height: 18px; background: #ececec; border-bottom: 1px solid #d5d5d5; flex: none; }
.bar .t { width: 18px; }
.grip { width: 5px; background: #565656; border-right: 1px solid #8b8b8b; }
.grip.wide { width: 7px; background: #4c4c4c; }
.sep { width: 3px; border-left: 1px solid #b2b2b2; margin-left: 2px; }
.styles .sep, .serif .sep { margin-left: 1px; width: 4px; border-right: 1px solid #b2b2b2; }
.serif { font: 9px/14px "Liberation Serif", serif; }
.c-ws { width: 138px; }
.c-ws select { padding-left: 7px; }
.c-layer { width: 235px; }
.c-layer svg { width: 13px; height: 13px; }
.swatch { width: 8px; height: 8px; background: #00f6f6; border: 1px solid #14383c; margin-left: 4px; }
.c-layer .swatch { margin-left: 1px; }
.c-color { width: 118px; }
.c-lt { width: 125px; }
.c-lw { width: 98px; }
.c-plot { font: 8px/14px "Liberation Mono", monospace; }
.c-plot select { padding-left: 5px; }
.rule { width: 27px; height: 1px; background: #555; margin-left: 3px; }
.rule.long { width: 49px; }

/* work area */
.work { flex: 1; display: flex; border-top: 2px solid #7e7e7e; margin-top: 1px; }
.rail { width: 22px; flex: none; padding-left: 1px; }
.rail.right { width: 21px; padding-left: 0; }
.palette { width: 18px; background: #efefef; border: 1px solid #d8d8d8; border-top: 0; }
.palette .grab { display: block; height: 6px; background: #4d4d4d; border-bottom: 1px solid #7d7d7d; }
.v { width: 16px; height: 17px; }
.v:nth-of-type(4n) { margin-bottom: 1px; }
.right .palette + .palette { padding-bottom: 1px; }
.hsep { display: block; height: 1px; margin: 3px 1px 2px; background: #b5b5b5; }
.center { flex: 1; min-width: 0; display: flex; flex-direction: column; padding-right: 3px; }
.view { flex: 1; display: flex; border-left: 2px solid #9b9b9b; margin-right: 3px; }
.canvas { flex: 1; position: relative; background: #222831; overflow: hidden; }
.vlabel { position: absolute; left: 3px; top: 4px; color: #dcdcdc; font: 10px/14px "Liberation Sans", "Noto Sans CJK SC", sans-serif; }
.piano { position: absolute; left: 432px; top: 118px; width: 128px; height: 333px; }
.compass { position: absolute; right: 7px; top: 8px; width: 110px; height: 142px; }
.dirs { font: 15px "Noto Sans CJK SC", sans-serif; fill: #b4b6b9; text-anchor: middle; }
.face { font: 22px "Noto Sans CJK SC", sans-serif; fill: #555a63; text-anchor: middle; }
.wcs { font: 8px "Liberation Sans", sans-serif; fill: #5c5e6c; }
.ucs { position: absolute; left: 9px; bottom: 6px; width: 62px; height: 62px; }
.vscroll { width: 13px; flex: none; background: #ededed; display: flex; flex-direction: column; align-items: center; padding: 6px 0 4px; gap: 6px; }
.up, .down, .lf, .rt { border: 2px solid transparent; }
.up { border-bottom: 3px solid #444; border-top: 0; }
.down { border-top: 3px solid #444; border-bottom: 0; margin-top: auto; }
.thumb { width: 11px; height: 11px; border: 1px solid #8f8f8f; border-radius: 2px; background: linear-gradient(90deg, #fafafa, #d0d0d0); }
.tabs { display: flex; align-items: stretch; height: 13px; background: #efefef; border-left: 2px solid #9b9b9b; margin-right: 1px; }
.nav { display: flex; width: 46px; flex: none; }
.nav button { flex: 1; display: flex; align-items: center; justify-content: center; border-right: 1px solid #bbb; }
.nav svg { width: 7px; height: 7px; fill: #555; }
.tab { flex: none; width: 36px; font: 10px/12px "Liberation Sans", "Noto Sans CJK SC", sans-serif; white-space: nowrap; background: linear-gradient(110deg, transparent 33px, #555 33px 34px, transparent 34px); }
.tab.on { width: 33px; background: #222831; color: #e9e9e9; clip-path: polygon(0 0, 100% 0, 88% 100%, 15% 100%); }
.hscroll { flex: 1; display: flex; align-items: center; gap: 6px; padding: 0 19px 0 467px; }
.split { width: 4px; height: 10px; border: 1px solid #c8c8c8; border-left-color: #a5a5a5; background: #fff; }
.lf { border-right: 3px solid #222; border-left: 0; }
.rt { border-left: 3px solid #222; border-right: 0; }
.gapf { flex: 1; }
.hscroll .gapf:nth-of-type(3) { flex: 138; }
.hscroll .gapf:nth-of-type(6) { flex: 106; }
.bar.dims { align-self: flex-start; margin: 4px 0 7px 1px; }
.dims .grip { width: 6px; }
.dims .sep { margin-left: 2px; width: 2px; }

/* command line */
.cmd { display: flex; border-top: 1px solid #5c5c5c; }
.side { width: 18px; flex: none; background: linear-gradient(90deg, #676767, #535353); display: flex; flex-direction: column; align-items: center; gap: 3px; }
.dots { width: 13px; height: 5px; margin-top: 2px; background: repeating-linear-gradient(90deg, #9a9a9a 0 1px, transparent 1px 2px); }
.side svg { width: 13px; height: 13px; }
.log { flex: 1; background: #c6c6c6; font: 9px/12px "Liberation Mono", "Noto Sans CJK SC", monospace; color: #222; padding-top: 1px; }
.log p { padding-left: 2px; height: 12px; }
.zh { font-size: 10px; }
.prompt { display: flex; align-items: center; height: 18px; margin-top: 1px; background: #fff; padding-left: 2px; color: #111; }
.prompt > span { margin-left: 1px; white-space: nowrap; }
.prompt input { flex: 1; min-width: 0; }

/* status bar */
.status { display: flex; align-items: stretch; height: 17px; background: linear-gradient(#7c7c7c, #939393); border-top: 1px solid #444; }
.status output { width: 160px; flex: none; padding-left: 9px; font: 8px/18px "Liberation Mono", monospace; color: #111; background: linear-gradient(#828282, #9d9d9d); white-space: nowrap; }
.group { display: flex; align-items: stretch; margin-right: 14px; }
.s { width: 17px; background: linear-gradient(#c0c0c0, #a5a5a5); border-right: 1px solid #858585; }
.s.on { background: linear-gradient(#d4eef8, #8fc9e0); }
.s.text { width: auto; padding: 0 2px; font-size: 9px; }
.s.ratio { font: 9px/14px "Liberation Mono", monospace; padding: 0; }
.s svg { width: 14px; height: 14px; }
.s.bulb { width: 19px; background: #77745f; }
.status .push { margin-left: auto; }
.status .group:nth-last-child(2) { margin-right: 4px; }
.status .group:last-child { margin-right: 1px; }

.callout { position: absolute; left: 0; top: 75px; width: 130px; height: 120px; pointer-events: none; }
```
